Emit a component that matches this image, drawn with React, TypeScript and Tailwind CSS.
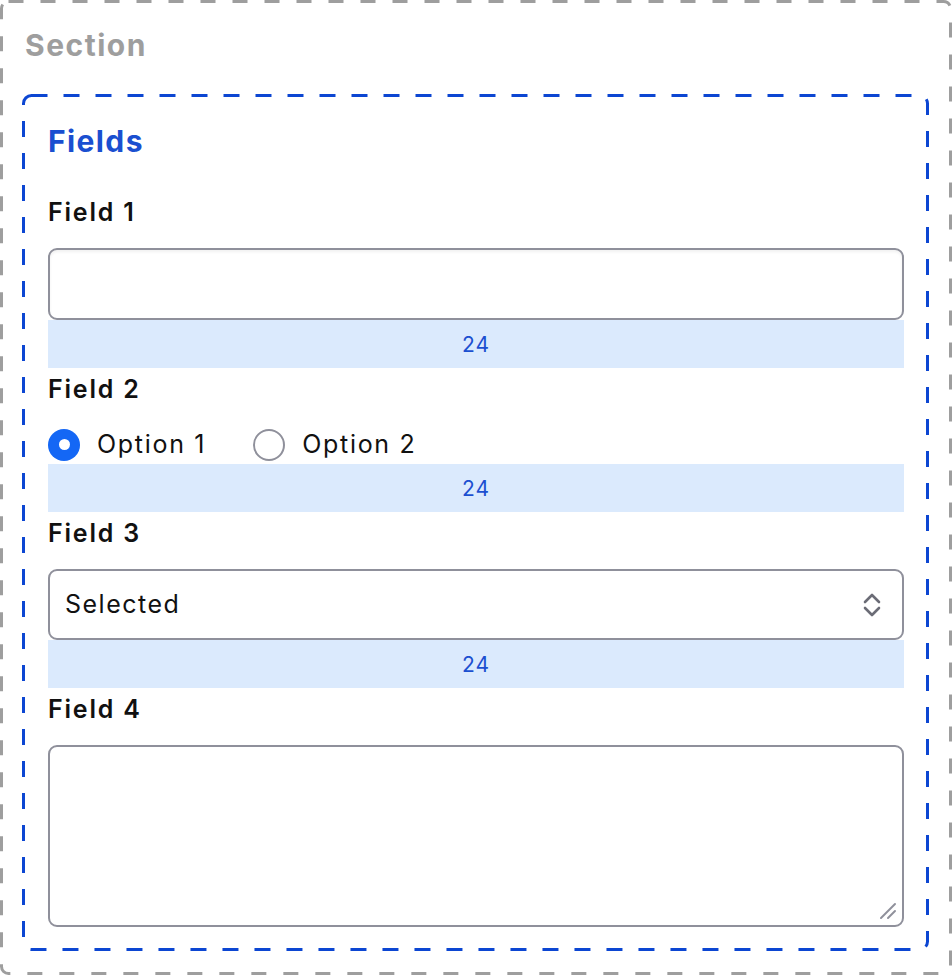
import React from "react";

function Spacer() {
  return (
    <div className="h-[48px] bg-[#dbeafd] flex items-center justify-center text-[21px] tracking-[1px] text-[#1c4fd0] leading-none">
      24
    </div>
  );
}

function Label({ children, first }: { children: React.ReactNode; first?: boolean }) {
  return (
    <div className={`${first ? "" : "mt-[5px]"} h-[32px] leading-[32px] text-[25px] tracking-[1.8px] font-semibold text-[#111111] mb-[20px]`}>
      {children}
    </div>
  );
}

function Radio({ checked, label }: { checked?: boolean; label: string }) {
  return (
    <div className="flex items-center gap-[17px]">
      {checked ? (
        <div className="w-[32px] h-[32px] rounded-full bg-[#1467f5] flex items-center justify-center">
          <div className="w-[11px] h-[11px] rounded-full bg-white" />
        </div>
      ) : (
        <div className="w-[32px] h-[32px] rounded-full border-2 border-[#8f909b] bg-white" />
      )}
      <span className="text-[25px] tracking-[1.7px] text-[#111111]">{label}</span>
    </div>
  );
}

export default function App() {
  return (
    <div className="w-[952px] h-[976px] bg-white" style={{ fontFamily: "Inter, 'Noto Sans', sans-serif" }}>
      <div className="relative w-[952px] h-[975px] border-[3px] border-transparent px-[19px] pt-[21px]">
        <svg className="absolute left-[-3px] top-[-3px] pointer-events-none" width="952" height="975" fill="none">
          <rect x="1.5" y="1.5" width="949" height="972" rx="7" stroke="#9e9e9e" strokeWidth="3" strokeDasharray="15 17" strokeDashoffset="0" />
        </svg>
        <div className="h-[42px] leading-[42px] text-[30px] tracking-[1.5px] font-bold text-[#9e9e9e] pl-[3px] mb-[28px]">Section</div>
        <div className="relative border-[3px] border-transparent px-[23px] pt-[24px] pb-[21px]">
          <svg className="absolute left-[-3px] top-[-3px] pointer-events-none" width="907" height="857" fill="none">
            <rect x="1.5" y="1.5" width="904" height="854" rx="8" stroke="#0c46d2" strokeWidth="3" strokeDasharray="16 16" strokeDashoffset="0" />
          </svg>
          <div className="h-[40px] leading-[40px] text-[30px] tracking-[1.4px] font-bold text-[#1a4fd0] mb-[35px]">Fields</div>

          <Label first>Field 1</Label>
          <div className="h-[72px] rounded-[9px] border-2 border-[#8f909b] bg-white shadow-[inset_0_2px_3px_rgba(0,0,0,0.06)]" />
          <Spacer />

          <Label>Field 2</Label>
          <div className="h-[39px] flex items-center gap-[47px]">
            <Radio checked label="Option 1" />
            <Radio label="Option 2" />
          </div>
          <Spacer />

          <Label>Field 3</Label>
          <div className="h-[71px] rounded-[9px] border-2 border-[#8f909b] bg-white flex items-center justify-between pl-[15px] pr-[20px]">
            <span className="text-[25px] tracking-[1.5px] text-[#111111]">Selected</span>
            <svg width="20" height="28" viewBox="0 0 20 28" fill="none">
              <path d="M3 11 L10 4 L17 11" stroke="#6b6c76" strokeWidth="2.6" strokeLinecap="round" strokeLinejoin="round" />
              <path d="M3 17 L10 24 L17 17" stroke="#6b6c76" strokeWidth="2.6" strokeLinecap="round" strokeLinejoin="round" />
            </svg>
          </div>
          <Spacer />

          <Label>Field 4</Label>
          <div className="relative h-[182px] rounded-[9px] border-2 border-[#8f909b] bg-white">
            <svg className="absolute right-[5px] bottom-[5px]" width="18" height="18" viewBox="0 0 18 18" fill="none">
              <path d="M2 16 L16 2" stroke="#8f909b" strokeWidth="2" strokeLinecap="round" />
              <path d="M9 16 L16 9" stroke="#8f909b" strokeWidth="2" strokeLinecap="round" />
            </svg>
          </div>
        </div>
      </div>
    </div>
  );
}
